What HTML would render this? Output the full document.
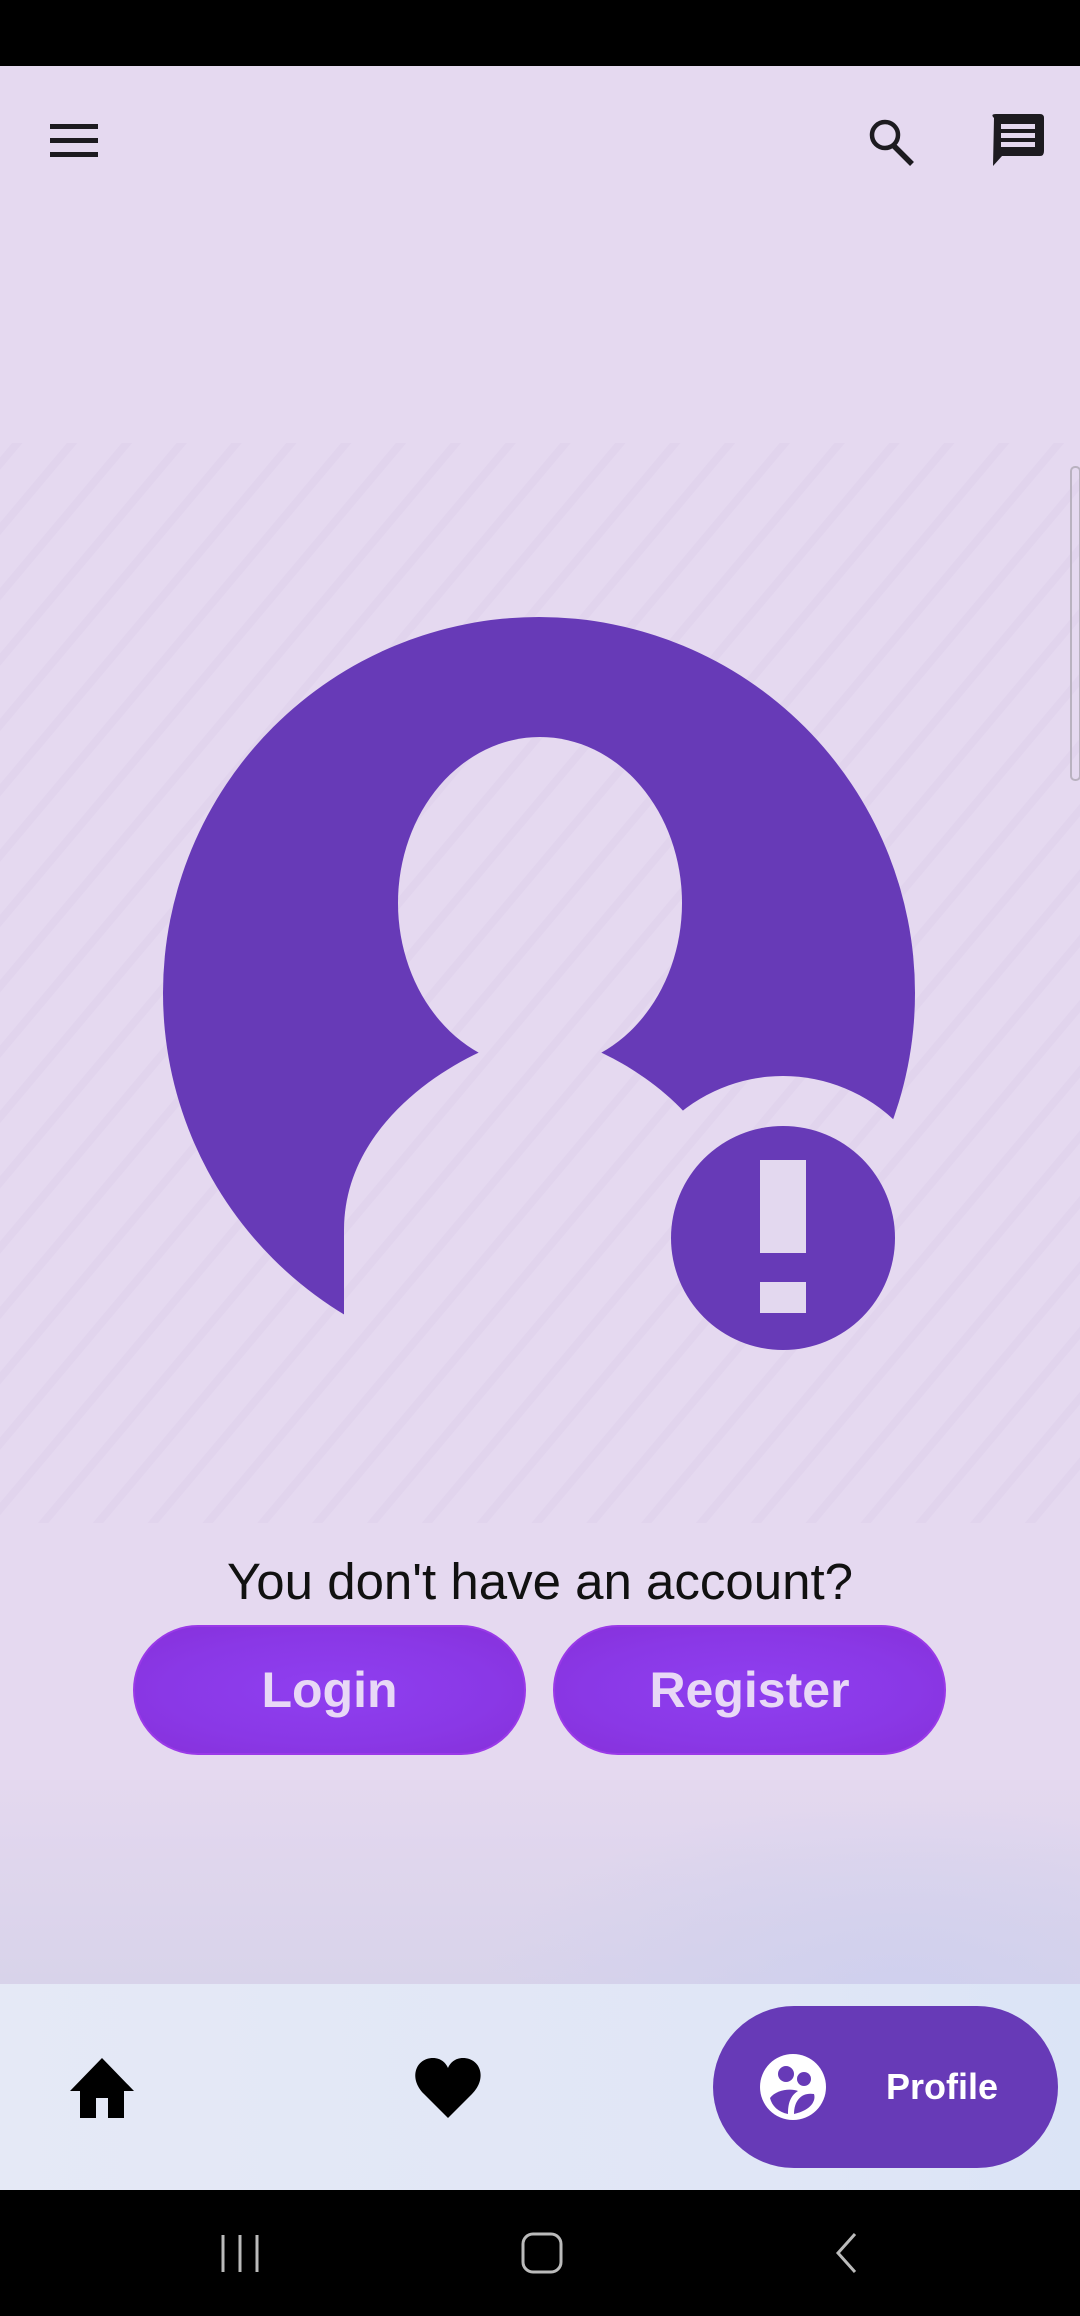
<!DOCTYPE html>
<html><head><meta charset="utf-8"><style>
html,body{margin:0;padding:0}
body{width:1080px;height:2316px;position:relative;overflow:hidden;background:#e5d9f0;font-family:"Liberation Sans",sans-serif}
.abs{position:absolute}
.btn{position:absolute;top:1625px;width:393px;height:130px;border-radius:65px;background:radial-gradient(ellipse at center,#8f3ff0 0%,#8a38e6 60%,#8630da 100%);border:2px solid #9a3ae8;box-sizing:border-box;color:#e8d8f6;font-weight:bold;font-size:50px;display:flex;align-items:center;justify-content:center}
</style></head><body>
<div class="abs" style="left:0;top:0;width:1080px;height:66px;background:#000"></div>
<div class="abs" style="left:0;top:1780px;width:1080px;height:204px;background:radial-gradient(ellipse 420px 200px at 900px 220px,#cfd0ee,transparent),linear-gradient(#e4d8ef,#d8d3ea)"></div>
<svg class="abs" style="left:0;top:66px" width="1080" height="150">
 <rect x="50" y="58" width="48" height="5" fill="#1d1b20"/>
 <rect x="50" y="72" width="48" height="5" fill="#1d1b20"/>
 <rect x="50" y="86" width="48" height="5" fill="#1d1b20"/>
 <circle cx="885" cy="69" r="13" fill="none" stroke="#1d1b20" stroke-width="4.5"/>
 <line x1="893" y1="79" x2="912" y2="98" stroke="#1d1b20" stroke-width="5.5"/>
 <path d="M994 52 Q990 48 996 48 H1040 Q1044 48 1044 52 V85 Q1044 90 1040 90 H1002 L993 100 Z" fill="#1d1b20"/>
 <rect x="1001" y="58" width="34" height="5" fill="#e5d9f0"/>
 <rect x="1001" y="67" width="34" height="5" fill="#e5d9f0"/>
 <rect x="1001" y="76" width="34" height="5" fill="#e5d9f0"/>
</svg>
<svg class="abs" style="left:0;top:0" width="1080" height="1560">
 <defs>
  <pattern id="st" width="42" height="50" patternUnits="userSpaceOnUse" patternTransform="rotate(40)">
   <rect x="0" y="0" width="8" height="50" fill="#ddcfea"/>
  </pattern>
  <mask id="m">
   <rect width="1080" height="1560" fill="#fff"/>
   <ellipse cx="540" cy="903" rx="142" ry="166" fill="#000"/>
   <path d="M344 1500 V1230 C344 1140 420 1080 480 1052 L600 1052 C660 1080 734 1140 734 1230 V1500 Z" fill="#000"/>
   <circle cx="783" cy="1238" r="162" fill="#000"/>
  </mask>
 </defs>
 <rect x="0" y="443" width="1080" height="1080" fill="url(#st)" opacity="0.5"/>
 <circle cx="539" cy="993" r="376" fill="#673ab7" mask="url(#m)"/>
 <circle cx="783" cy="1238" r="112" fill="#673ab7"/>
 <rect x="760" y="1160" width="46" height="93" fill="#e3d8ef"/>
 <rect x="760" y="1282" width="46" height="31" fill="#e3d8ef"/>
 <rect x="1071" y="467" width="9" height="313" rx="4" fill="none" stroke="#b9b2c0" stroke-width="2"/>
</svg>
<div class="abs" style="left:0;top:1552px;width:1080px;text-align:center;font-size:51px;color:#111;line-height:60px">You don't have an account?</div>
<div class="btn" style="left:133px">Login</div>
<div class="btn" style="left:553px">Register</div>
<div class="abs" style="left:0;top:1984px;width:1080px;height:206px;background:linear-gradient(90deg,#e5e9f6,#e0e6f6 70%,#dbe4f6)"></div>
<svg class="abs" style="left:0;top:1984px" width="1080" height="206">
 <path d="M102 74 L70 107 H80 V134 H96 V114 H108 V134 H124 V107 H134 Z" fill="#000"/>
 <path d="M448 134 L424 110 C408 94 416 74 433 74 C441 74 446 79 448 84 C450 79 455 74 463 74 C480 74 488 94 472 110 Z" fill="#000"/>
</svg>
<div class="abs" style="left:713px;top:2006px;width:345px;height:162px;border-radius:81px;background:#673ab7"></div>
<svg class="abs" style="left:760px;top:2054px" width="66" height="66">
 <circle cx="33" cy="33" r="33" fill="#fff"/>
 <circle cx="26" cy="20" r="8" fill="#673ab7"/>
 <circle cx="44" cy="25" r="7" fill="#673ab7"/>
 <path d="M10 44 C16 36 30 34 38 37 C30 42 28 50 28 60 C18 58 12 52 10 44 Z" fill="#673ab7"/>
 <path d="M34 60 C34 46 42 38 54 40 C56 46 52 56 34 60 Z" fill="#673ab7"/>
</svg>
<div class="abs" style="left:886px;top:2062px;font-size:36px;font-weight:bold;color:#fff;line-height:50px">Profile</div>
<div class="abs" style="left:0;top:2190px;width:1080px;height:126px;background:#000"></div>
<svg class="abs" style="left:0;top:2190px" width="1080" height="126">
 <g stroke="#bbb" stroke-width="3" fill="none">
  <line x1="223" y1="45" x2="223" y2="82"/><line x1="240" y1="45" x2="240" y2="82"/><line x1="257" y1="45" x2="257" y2="82"/>
  <rect x="523" y="44" width="38" height="38" rx="10"/>
  <polyline points="855,44 838,63 855,82"/>
 </g>
</svg>
</body></html>
